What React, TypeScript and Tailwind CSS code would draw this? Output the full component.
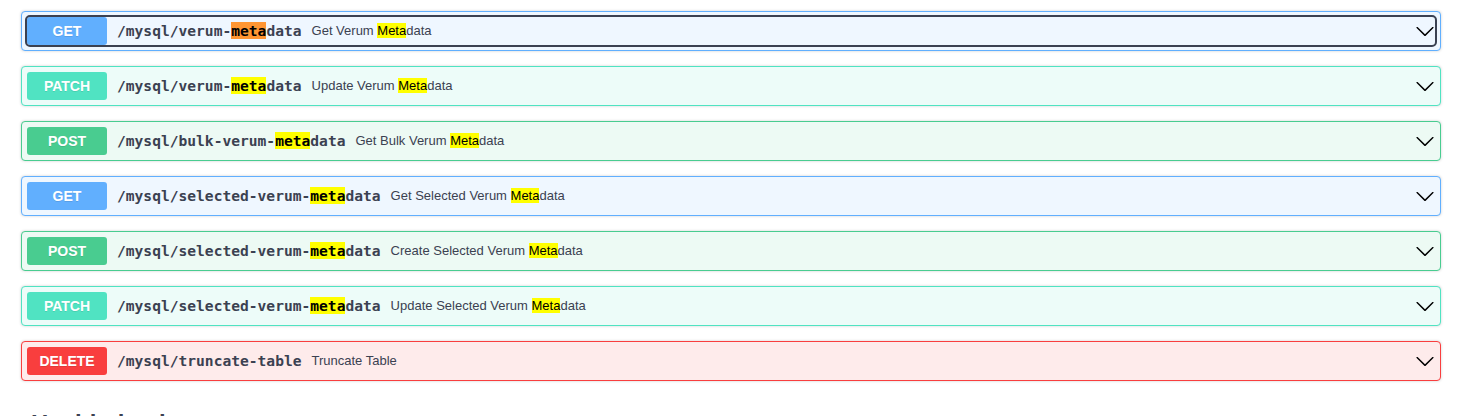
import React from 'react'

type Method = 'GET' | 'PATCH' | 'POST' | 'DELETE';

interface Endpoint {
    method: Method;
    path: string;
    summary: string;
    focused?: boolean;
}

const styles: Record<Method, { row: string; badge: string }> = {
    GET: { row: 'bg-[#eff7ff] border-[#61affe]', badge: 'bg-[#61affe]' },
    PATCH: { row: 'bg-[#edfcf9] border-[#50e3c2]', badge: 'bg-[#50e3c2]' },
    POST: { row: 'bg-[#edfaf4] border-[#49cc90]', badge: 'bg-[#49cc90]' },
    DELETE: { row: 'bg-[#feebeb] border-[#f93e3e]', badge: 'bg-[#f93e3e]' },
};

const endpoints: Endpoint[] = [
    { method: 'GET', path: '/mysql/verum-metadata', summary: 'Get Verum Metadata', focused: true },
    { method: 'PATCH', path: '/mysql/verum-metadata', summary: 'Update Verum Metadata' },
    { method: 'POST', path: '/mysql/bulk-verum-metadata', summary: 'Get Bulk Verum Metadata' },
    { method: 'GET', path: '/mysql/selected-verum-metadata', summary: 'Get Selected Verum Metadata' },
    { method: 'POST', path: '/mysql/selected-verum-metadata', summary: 'Create Selected Verum Metadata' },
    { method: 'PATCH', path: '/mysql/selected-verum-metadata', summary: 'Update Selected Verum Metadata' },
    { method: 'DELETE', path: '/mysql/truncate-table', summary: 'Truncate Table' },
];

// wraps the searched word in a find-in-page style highlight
const highlight = (text: string, word: string, active: boolean) => {
    const i = text.toLowerCase().indexOf(word);
    if (i < 0) return text;
    return (
        <>
            {text.slice(0, i)}
            <span className={(active ? 'bg-[#ff9632]' : 'bg-[#ffff00]') + ' text-black'}>{text.slice(i, i + word.length)}</span>
            {text.slice(i + word.length)}
        </>
    );
};

const Arrow = () => (
    <svg width="20" height="20" viewBox="0 0 20 20" className="shrink-0 fill-[#000]">
        <path d="M17.418 6.109c.272-.268.709-.268.979 0s.271.701 0 .969l-7.908 7.83c-.27.268-.707.268-.979 0l-7.908-7.83c-.27-.268-.27-.701 0-.969.271-.268.709-.268.979 0L10 13.25l7.418-7.141z" />
    </svg>
);

const Row: React.FC<{ ep: Endpoint }> = ({ ep }) => {
    const s = styles[ep.method];
    return (
        <div className={`mb-[15px] border rounded-[4px] shadow-[0_0_3px_rgba(0,0,0,0.19)] p-[5px] ${s.row}`}>
            <div className={`flex items-center h-[28px] rounded-[3px] ${ep.focused ? 'outline-2 outline-[#3b4151]' : ''}`}>
                <span className={`w-[80px] h-[28px] shrink-0 rounded-[3px] flex items-center justify-center text-white font-bold text-[14px] [text-shadow:0_1px_0_rgba(0,0,0,0.1)] ${s.badge}`}>
                    {ep.method}
                </span>
                <span className="px-[10px] font-['DejaVu_Sans_Mono',monospace] font-bold text-[14.6px] text-[#3b4151] whitespace-nowrap">
                    {highlight(ep.path, 'meta', !!ep.focused)}
                </span>
                <span className="text-[13px] text-[#3b4151] whitespace-nowrap flex-1">
                    {highlight(ep.summary, 'meta', false)}
                </span>
                <Arrow />
            </div>
        </div>
    );
};

const App: React.FC = () => {
    return (
        <div className="h-[416px] overflow-hidden bg-white px-[21px] pt-[11px] pr-[32px] font-['Liberation_Sans',Arial,sans-serif]">
            {endpoints.map((ep, i) => <Row key={i} ep={ep} />)}
            <div className="flex items-center justify-between pt-[10px] pb-[10px] pl-[10px] pr-[26px]">
                <h3 className="text-[24px] font-bold text-[#3b4151]">Healthchecks</h3>
                <svg width="20" height="20" viewBox="0 0 20 20" className="fill-[#000]">
                    <path d="M2.582 13.891c-.272.268-.709.268-.979 0s-.271-.701 0-.969l7.908-7.83c.27-.268.707-.268.979 0l7.908 7.83c.27.268.27.701 0 .969-.271.268-.709.268-.979 0L10 6.75l-7.418 7.141z" />
                </svg>
            </div>
        </div>
    );
}

export default App
